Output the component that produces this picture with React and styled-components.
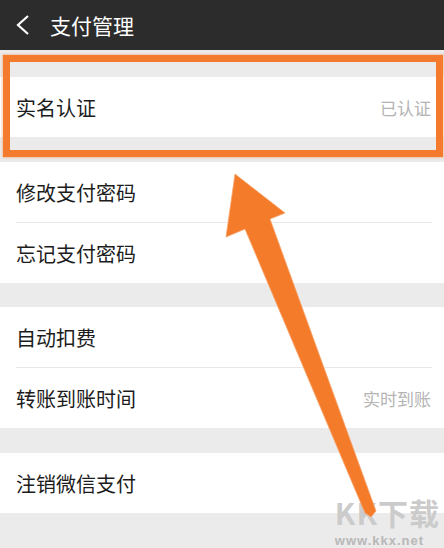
import styled, { createGlobalStyle } from 'styled-components'

const Global = createGlobalStyle`
  html, body {
    margin: 0;
    padding: 0;
    background: #ebebeb;
  }
  * { box-sizing: border-box; }
`

const Page = styled.div`
  position: relative;
  width: 444px;
  height: 548px;
  overflow: hidden;
  background: #ebebeb;
  font-family: "Noto Sans CJK SC", "Noto Sans", sans-serif;
`

const Header = styled.div`
  display: flex;
  align-items: center;
  height: 50px;
  padding-left: 16px;
  background: #2c2c2c;
  color: #fff;
`

const Title = styled.span`
  margin-left: 20px;
  font-size: 21px;
  line-height: 1;
`

const Group = styled.div`
  margin-top: ${({ gap }) => gap}px;
  background: #fff;
`

const Row = styled.div`
  display: flex;
  align-items: center;
  justify-content: space-between;
  height: 60px;
  padding: 0 13px 0 16px;
`

const Label = styled.span`
  font-size: 20px;
  color: #1c1c1c;
`

const Value = styled.span`
  font-size: 17px;
  color: #b4b4b4;
`

const Divider = styled.div`
  height: 1px;
  margin: 0 12px 0 16px;
  background: #e8e8e8;
`

// the red-pen highlight sits over the first row
const Highlight = styled.div`
  position: absolute;
  left: 3px;
  top: 55px;
  width: 440px;
  height: 102px;
  border: 7px solid #f47b2e;
  box-shadow: 0 0 2px 1px rgba(244, 123, 46, 0.35);
`

const Overlay = styled.svg`
  position: absolute;
  left: 0;
  top: 0;
  pointer-events: none;
`

const Watermark = styled.div`
  position: absolute;
  right: 4px;
  bottom: 0;
  display: flex;
  flex-direction: column;
  align-items: flex-start;
`

const MarkLogo = styled.span`
  display: block;
  font-family: "Noto Sans CJK SC", sans-serif;
  font-size: 30px;
  font-weight: 700;
  line-height: 44px;
  height: 44px;
  letter-spacing: 1px;
  color: #cbcbcb;
`

const MarkUrl = styled.span`
  display: block;
  font-family: "Liberation Sans", sans-serif;
  font-size: 13px;
  font-weight: 700;
  line-height: 14px;
  letter-spacing: 1px;
  color: #b8b8b8;
`

const groups = [
  { gap: 27, rows: [{ label: '实名认证', value: '已认证' }] },
  { gap: 25, rows: [{ label: '修改支付密码' }, { label: '忘记支付密码' }] },
  { gap: 24, rows: [{ label: '自动扣费' }, { label: '转账到账时间', value: '实时到账' }] },
  { gap: 25, rows: [{ label: '注销微信支付' }] },
]

const App = () => (
  <Page>
    <Global />
    <Header>
      <svg width="14" height="22" viewBox="0 0 14 22">
        <polyline points="12,2 2,11 12,20" fill="none" stroke="#fff" strokeWidth="2.2" />
      </svg>
      <Title>支付管理</Title>
    </Header>
    {groups.map((g, gi) => (
      <Group key={gi} gap={g.gap}>
        {g.rows.map((r, ri) => (
          <div key={r.label}>
            {ri > 0 && <Divider />}
            <Row>
              <Label>{r.label}</Label>
              {r.value && <Value>{r.value}</Value>}
            </Row>
          </div>
        ))}
      </Group>
    ))}
    <Highlight />
    <Watermark>
      <MarkLogo>KK下载</MarkLogo>
      <MarkUrl>www.kkx.net</MarkUrl>
    </Watermark>
    <Overlay width="444" height="548" viewBox="0 0 444 548">
      <polygon
        points="235,174 285,213 270,219 376,511 371,517 365,513 245,229 226,237"
        fill="#f47b2a"
        stroke="#f7a36b"
        strokeWidth="0.8"
        strokeLinejoin="round"
      />
    </Overlay>
  </Page>
)

export default App
